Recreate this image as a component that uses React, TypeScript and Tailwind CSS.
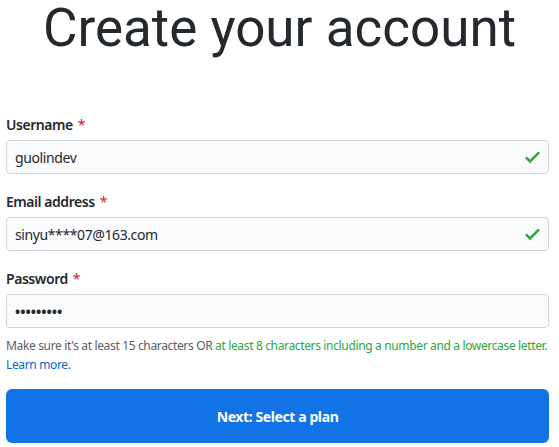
import React from "react";

const body = { fontFamily: '"Noto Sans", "Open Sans", sans-serif' };

function Check() {
  return (
    <svg width="15" height="20" viewBox="0 0 12 16" className="absolute right-[8px] top-[6px]" fill="#34a843">
      <path d="M12 5l-8 8-4-4 1.5-1.5L4 10l6.5-6.5L12 5z" />
    </svg>
  );
}

function Label({ text }: { text: string }) {
  return (
    <div className="flex h-[20px] items-center text-[14px] font-semibold tracking-[-0.45px] text-[#24292e]">
      {text}
      <span className="ml-[5px] font-normal text-[#cb2431]">*</span>
    </div>
  );
}

function Field({ label, value, ok }: { label: string; value: string; ok?: boolean }) {
  return (
    <div className="mb-[17px]">
      <Label text={label} />
      <div className="relative mt-[6px] flex h-[34px] items-center rounded-[4px] border border-[#d1d5da] bg-[#fafbfc] px-[8px] text-[14px] tracking-[-0.4px] text-[#24292e]">
        {value}
        {ok && <Check />}
      </div>
    </div>
  );
}

export default function App() {
  return (
    <div className="h-[447px] w-[559px] overflow-hidden bg-white" style={body}>
      <h1
        className="h-[114px] text-center text-[53px] font-normal leading-[56px] text-[#24292e]"
        style={{ fontFamily: "Roboto, sans-serif" }}
      >
        Create your account
      </h1>
      <div className="pl-[6px] pr-[10px]">
        <Field label="Username" value="guolindev" ok />
        <Field label="Email address" value="sinyu****07@163.com" ok />
        <div className="mb-[8px]">
          <Label text="Password" />
          <div className="mt-[6px] flex h-[34px] items-center rounded-[4px] border border-[#d1d5da] bg-[#fafbfc] px-[8px] text-[14px] font-bold text-[#24292e]">
            •••••••••
          </div>
        </div>
        <p className="text-[12px] leading-[19px] tracking-[-0.35px] text-[#586069]">
          <span className="whitespace-nowrap">
            Make sure it's at least 15 characters OR{" "}
            <span className="text-[#28a745]">at least 8 characters including a number and a lowercase letter.</span>
          </span>
          <span className="block text-[#0366d6]">Learn more.</span>
        </p>
        <button className="mt-[15px] flex h-[54px] w-full items-center justify-center rounded-[6px] bg-[#1273e6] text-[14px] font-bold tracking-[-0.4px] text-white">
          Next: Select a plan
        </button>
      </div>
    </div>
  );
}
